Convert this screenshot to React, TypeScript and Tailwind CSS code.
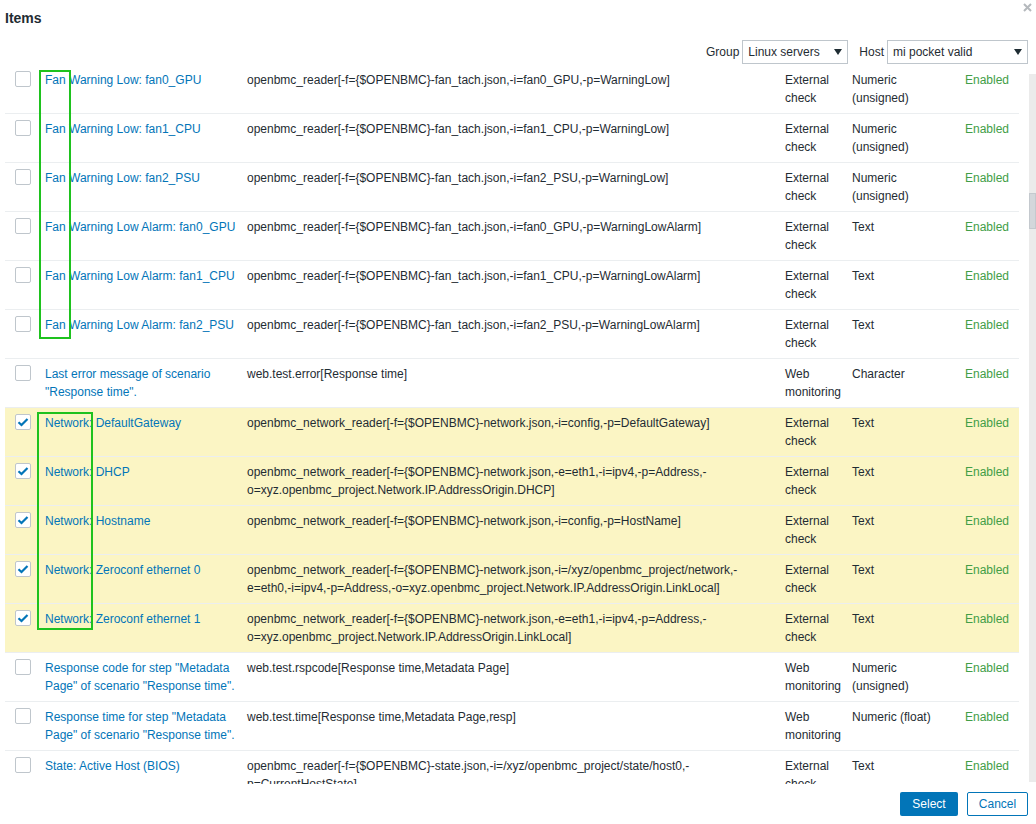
type Row = {
  name: string;
  key: string;
  type: string;
  info: string;
  checked?: boolean;
};

const rows: Row[] = [
  { name: "Fan Warning Low: fan0_GPU", key: "openbmc_reader[-f={$OPENBMC}-fan_tach.json,-i=fan0_GPU,-p=WarningLow]", type: "External check", info: "Numeric (unsigned)" },
  { name: "Fan Warning Low: fan1_CPU", key: "openbmc_reader[-f={$OPENBMC}-fan_tach.json,-i=fan1_CPU,-p=WarningLow]", type: "External check", info: "Numeric (unsigned)" },
  { name: "Fan Warning Low: fan2_PSU", key: "openbmc_reader[-f={$OPENBMC}-fan_tach.json,-i=fan2_PSU,-p=WarningLow]", type: "External check", info: "Numeric (unsigned)" },
  { name: "Fan Warning Low Alarm: fan0_GPU", key: "openbmc_reader[-f={$OPENBMC}-fan_tach.json,-i=fan0_GPU,-p=WarningLowAlarm]", type: "External check", info: "Text" },
  { name: "Fan Warning Low Alarm: fan1_CPU", key: "openbmc_reader[-f={$OPENBMC}-fan_tach.json,-i=fan1_CPU,-p=WarningLowAlarm]", type: "External check", info: "Text" },
  { name: "Fan Warning Low Alarm: fan2_PSU", key: "openbmc_reader[-f={$OPENBMC}-fan_tach.json,-i=fan2_PSU,-p=WarningLowAlarm]", type: "External check", info: "Text" },
  { name: "Last error message of scenario \"Response time\".", key: "web.test.error[Response time]", type: "Web monitoring", info: "Character" },
  { name: "Network: DefaultGateway", key: "openbmc_network_reader[-f={$OPENBMC}-network.json,-i=config,-p=DefaultGateway]", type: "External check", info: "Text", checked: true },
  { name: "Network: DHCP", key: "openbmc_network_reader[-f={$OPENBMC}-network.json,-e=eth1,-i=ipv4,-p=Address,-o=xyz.openbmc_project.Network.IP.AddressOrigin.DHCP]", type: "External check", info: "Text", checked: true },
  { name: "Network: Hostname", key: "openbmc_network_reader[-f={$OPENBMC}-network.json,-i=config,-p=HostName]", type: "External check", info: "Text", checked: true },
  { name: "Network: Zeroconf ethernet 0", key: "openbmc_network_reader[-f={$OPENBMC}-network.json,-i=/xyz/openbmc_project/network,-e=eth0,-i=ipv4,-p=Address,-o=xyz.openbmc_project.Network.IP.AddressOrigin.LinkLocal]", type: "External check", info: "Text", checked: true },
  { name: "Network: Zeroconf ethernet 1", key: "openbmc_network_reader[-f={$OPENBMC}-network.json,-e=eth1,-i=ipv4,-p=Address,-o=xyz.openbmc_project.Network.IP.AddressOrigin.LinkLocal]", type: "External check", info: "Text", checked: true },
  { name: "Response code for step \"Metadata Page\" of scenario \"Response time\".", key: "web.test.rspcode[Response time,Metadata Page]", type: "Web monitoring", info: "Numeric (unsigned)" },
  { name: "Response time for step \"Metadata Page\" of scenario \"Response time\".", key: "web.test.time[Response time,Metadata Page,resp]", type: "Web monitoring", info: "Numeric (float)" },
  { name: "State: Active Host (BIOS)", key: "openbmc_reader[-f={$OPENBMC}-state.json,-i=/xyz/openbmc_project/state/host0,-p=CurrentHostState]", type: "External check", info: "Text" },
];

function Checkbox({ checked }: { checked?: boolean }) {
  return (
    <div className="w-[16px] h-[16px] border border-[#bfc6cc] rounded-[2px] bg-white flex items-center justify-center">
      {checked && (
        <svg width="12" height="10" viewBox="0 0 12 10">
          <path d="M1.5 5.2 L4.5 8 L10.5 2" fill="none" stroke="#0275b8" strokeWidth="2.2" />
        </svg>
      )}
    </div>
  );
}

function Select({ value, width }: { value: string; width: string }) {
  return (
    <div className={`${width} h-[24px] border border-[#bfc6cc] bg-white flex items-center justify-between pl-[5px] pr-[5px]`}>
      <span>{value}</span>
      <svg width="8" height="6" viewBox="0 0 8 6">
        <path d="M0 0 H8 L4 6 Z" fill="#1f2c33" />
      </svg>
    </div>
  );
}

export default function App() {
  return (
    <div
      className="relative w-[1036px] h-[824px] bg-white text-[12px] leading-[18px] text-[#1f2c33] overflow-hidden"
      style={{ fontFamily: '"Liberation Sans", Arial, sans-serif' }}
    >
      {/* Title */}
      <div className="pl-[5px] pt-[10px] text-[14px] leading-[16px] font-bold text-[#1f2c33]">Items</div>
      <svg className="absolute left-[1023px] top-[3px]" width="9" height="9" viewBox="0 0 9 9">
        <path d="M1 1 L8 8 M8 1 L1 8" stroke="#b5b9bd" strokeWidth="2" />
      </svg>

      {/* Filter */}
      <div className="mt-[14px] h-[24px] flex items-center justify-end pr-[8px]">
        <span className="mr-[3px]">Group</span>
        <Select value="Linux servers" width="w-[106px]" />
        <span className="ml-[11px] mr-[3px]">Host</span>
        <Select value="mi pocket valid" width="w-[141px]" />
      </div>

      {/* List */}
      <div className="mt-[1px] h-[719px] flex overflow-hidden">
        <div className="w-[1019px] pl-[5px]">
          <table className="table-fixed w-[1014px] border-collapse">
            <colgroup>
              <col className="w-[34px]" />
              <col className="w-[202px]" />
              <col className="w-[538px]" />
              <col className="w-[67px]" />
              <col className="w-[113px]" />
              <col className="w-[60px]" />
            </colgroup>
            <tbody>
              {rows.map((r, i) => (
                <tr
                  key={i}
                  className={`border-b border-[#ebeef0] align-top ${r.checked ? "bg-[#fbf5c4]" : ""}`}
                >
                  <td className="pl-[10px] pt-[6px] pb-[6px]">
                    <Checkbox checked={r.checked} />
                  </td>
                  <td className="pl-[6px] pr-0 pt-[6px] pb-[6px] text-[#0275b8]">{r.name}</td>
                  <td className="px-[6px] pt-[6px] pb-[6px]">{r.key}</td>
                  <td className="px-[6px] pt-[6px] pb-[6px]">{r.type}</td>
                  <td className="px-[6px] pt-[6px] pb-[6px]">{r.info}</td>
                  <td className="px-[6px] pt-[6px] pb-[6px] text-[#429e47]">Enabled</td>
                </tr>
              ))}
            </tbody>
          </table>
        </div>
        <div className="ml-[10px] mt-[9px] w-[7px] h-[708px] bg-[#ebebeb] relative">
          <div className="absolute left-0 top-[119px] w-[7px] h-[36px] bg-[#d3d7db] border border-[#c4c9ce]" />
        </div>
      </div>

      {/* Footer */}
      <div className="mt-[8px] flex justify-end gap-[9px] pr-[8px]">
        <button className="w-[58px] h-[24px] bg-[#0275b8] text-white rounded-[2px]">Select</button>
        <button className="w-[61px] h-[24px] bg-white text-[#0275b8] border border-[#0275b8] rounded-[2px]">Cancel</button>
      </div>

      {/* Annotation boxes */}
      <div className="absolute left-[39px] top-[70px] w-[32px] h-[269px] border-2 border-[#1ec21e]" />
      <div className="absolute left-[37px] top-[412px] w-[56px] h-[218px] border-2 border-[#1ec21e]" />
    </div>
  );
}
